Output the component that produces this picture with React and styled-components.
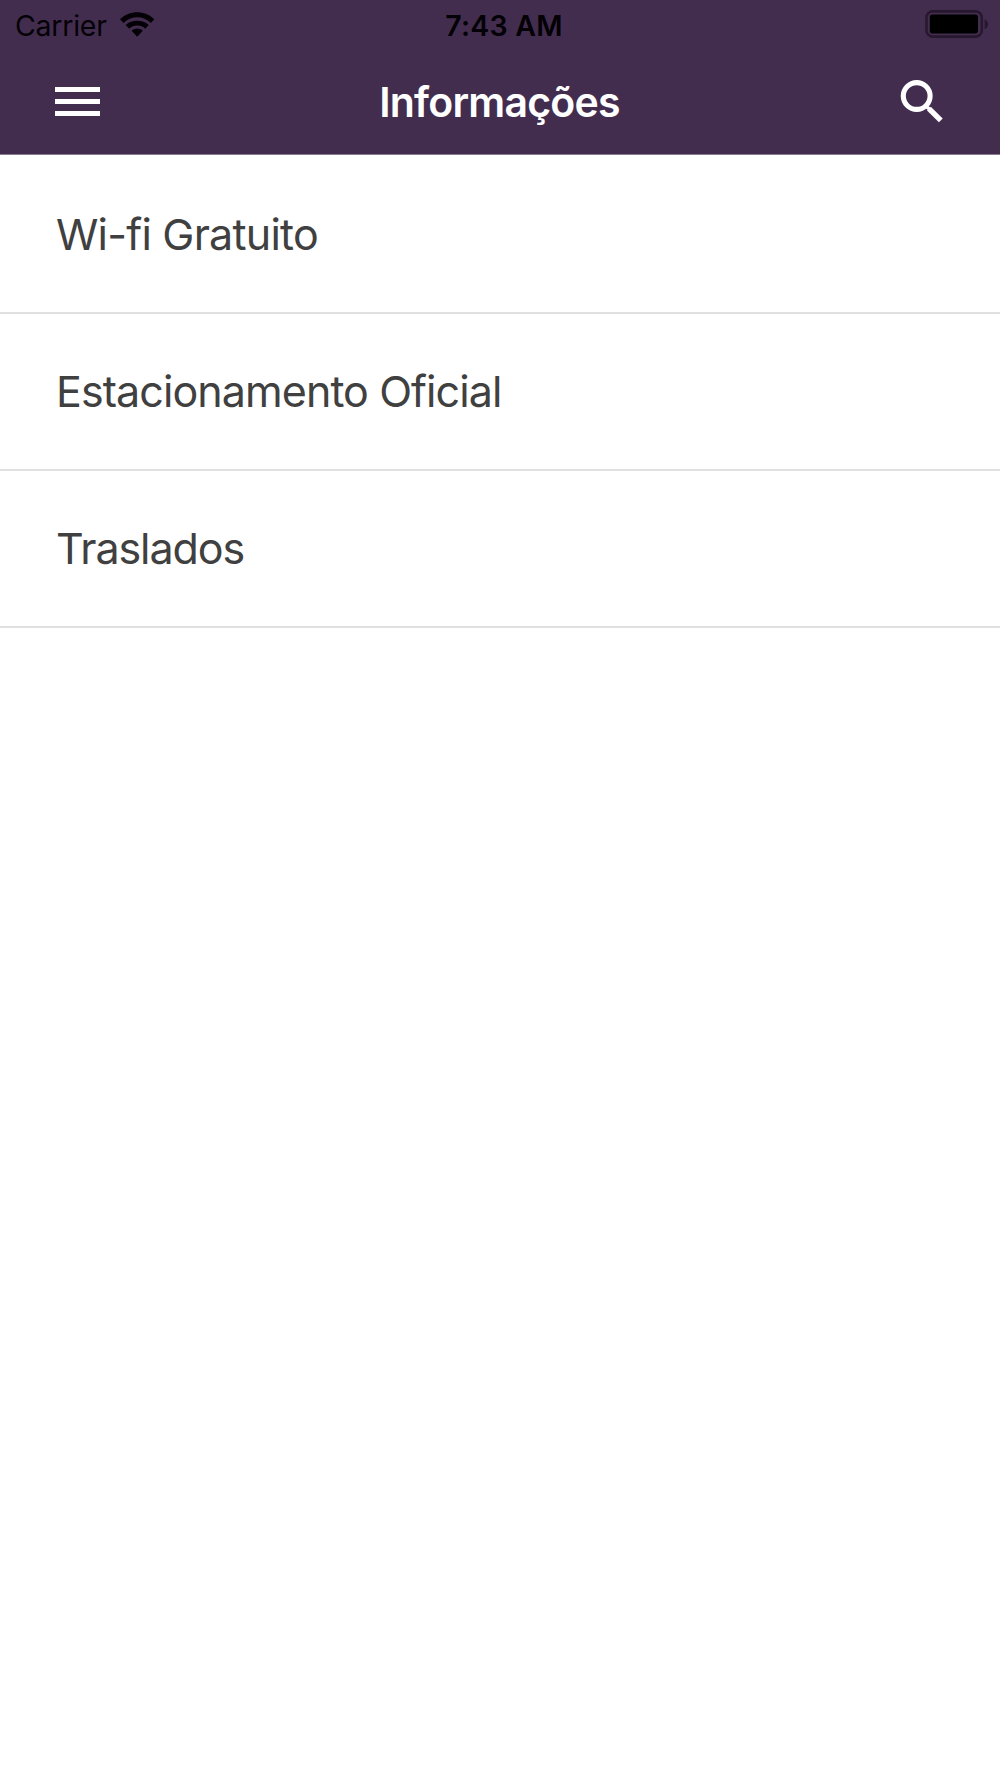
import styled, { createGlobalStyle } from 'styled-components';

const items = [
    { label: 'Wi-fi Gratuito', tracking: -0.77, indent: 56 },
    { label: 'Estacionamento Oficial', tracking: -0.92, indent: 56 },
    { label: 'Traslados', tracking: -1.06, indent: 56 },
];

function WifiIcon() {
    return (
        <svg width="35" height="26" viewBox="0 0 35 26" fill="#040106">
            <path d="M0 7.2C9.3-2.2 25.1-2.2 34.4 7.2L30.8 10.9C23.6 3.3 10.8 3.3 3.6 10.9Z" />
            <path d="M5.6 12.9C12 7.3 22.4 7.3 28.8 12.9L25.2 16.8C21 12.5 13.4 12.5 9.2 16.8Z" />
            <path d="M11.6 18.7C14.8 15.9 19.6 15.9 22.8 18.7L17.2 24.8Z" />
        </svg>
    );
}

function BatteryIcon() {
    return (
        <svg width="64" height="28" viewBox="0 0 64 28">
            <rect x="1.5" y="1.4" width="55.3" height="25.2" rx="6.2" fill="none" stroke="#28182f" strokeWidth="2.6" />
            <rect x="4.8" y="4.6" width="48.2" height="18.8" rx="2.6" fill="#000" />
            <path d="M59.6 9.2C64.2 11 64.2 17.5 59.6 19.3Z" fill="#28182f" />
        </svg>
    );
}

function SearchIcon() {
    return (
        <svg width="43" height="43" viewBox="0 0 43 43" fill="none" stroke="#fff">
            <circle cx="16.7" cy="16" r="13.4" strokeWidth="5.1" />
            <path d="M25.7 25.8L29.7 29.6" strokeWidth="3.4" />
            <path d="M28.9 28.6L40.8 40.4" strokeWidth="5.4" />
        </svg>
    );
}

function App() {
    return (
        <Screen>
            <GlobalStyle />
            <Header>
                <StatusBar>
                    <Carrier>
                        <span>Carrier</span>
                        <WifiIcon />
                    </Carrier>
                    <Clock>7:43 AM</Clock>
                    <Battery><BatteryIcon /></Battery>
                </StatusBar>
                <NavBar>
                    <MenuButton aria-label="Menu">
                        <MenuLine />
                        <MenuLine />
                        <MenuLine />
                    </MenuButton>
                    <Title>Informações</Title>
                    <SearchButton aria-label="Buscar"><SearchIcon /></SearchButton>
                </NavBar>
            </Header>
            <List>
                {items.map((item) => (
                    <ListItem key={item.label} $tracking={item.tracking} $indent={item.indent}>
                        {item.label}
                    </ListItem>
                ))}
            </List>
        </Screen>
    );
}

const GlobalStyle = createGlobalStyle`
    * { box-sizing: border-box; }
    body {
        margin: 0;
        background: #fff;
        font-family: Inter, Roboto, sans-serif;
    }
    svg { display: block; flex: none; }
`;

const Screen = styled.div`
    min-height: 1778px;
    background: #fff;
`;

const Header = styled.header`
    height: 155px;
    background: #432d4f;
    border-bottom: 1px solid #8a7b93;
`;

const StatusBar = styled.div`
    display: grid;
    grid-template-columns: 1fr auto 1fr;
    align-items: center;
    height: 48px;
    padding: 3px 11px 0 15px;
    color: #040106;
    font-size: 28.5px;
    line-height: 45px;
`;

const Carrier = styled.div`
    display: flex;
    align-items: center;
    gap: 13.5px;
    letter-spacing: -0.25px;

    svg { margin-bottom: 1px; }
`;

const Clock = styled.div`
    padding-left: 4px;
    font-weight: 600;
    letter-spacing: 0.2px;
`;

const Battery = styled.div`
    display: flex;
    justify-content: flex-end;
    margin-bottom: 3px;
`;

const NavBar = styled.nav`
    display: grid;
    grid-template-columns: 1fr auto 1fr;
    align-items: center;
    height: 106px;
    padding: 0 57px 0 55px;
`;

const IconButton = styled.button`
    padding: 0;
    border: 0;
    background: none;
    cursor: pointer;
`;

const MenuButton = styled(IconButton)`
    display: flex;
    flex-direction: column;
    gap: 7px;
    width: 44.5px;
    margin-top: 1px;
`;

const MenuLine = styled.span`
    height: 5px;
    background: #fff;
`;

const Title = styled.h1`
    margin: 0;
    padding: 2px 0 0 1px;
    color: #fff;
    font-size: 41px;
    font-weight: 600;
    letter-spacing: -0.78px;
`;

const SearchButton = styled(IconButton)`
    justify-self: end;
`;

const List = styled.ul`
    margin: 0;
    padding: 2px 0 0;
    list-style: none;
`;

const ListItem = styled.li`
    display: flex;
    align-items: center;
    height: 157px;
    padding: 0 0 2px ${({ $indent }) => $indent}px;
    border-bottom: 2px solid #e0e0e0;
    color: #404040;
    font-size: 43px;
    letter-spacing: ${({ $tracking }) => $tracking}px;
`;

export default App;
